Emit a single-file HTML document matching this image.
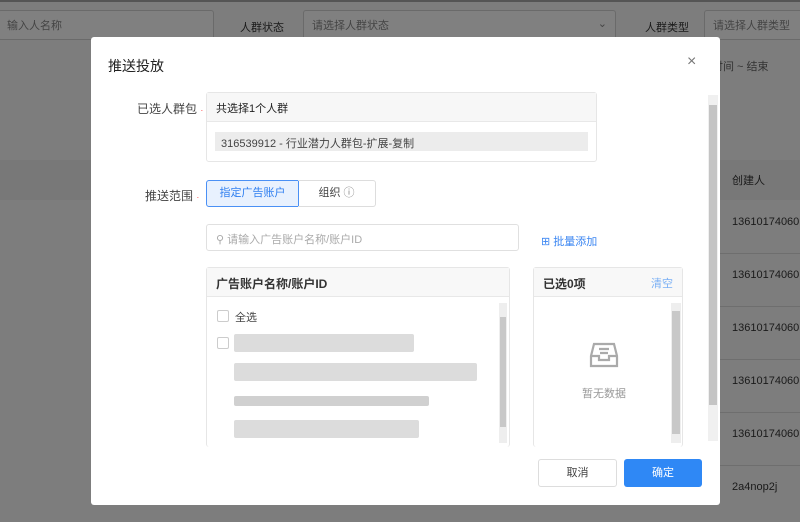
<!DOCTYPE html>
<html><head><meta charset="utf-8"><style>
*{box-sizing:border-box;margin:0;padding:0}
body{width:800px;height:522px;overflow:hidden;background:#7d7d7d;font-family:"Liberation Sans","Noto Sans CJK SC",sans-serif;font-size:12px;color:#222;position:relative}
.a{position:absolute}
.bgt{color:#1a1a1a;font-size:11px}
.inp{border:1px solid #6a6a6a;background:#808080;border-radius:3px;color:#444;font-size:11px;padding:6px 8px}
.modal{left:91px;top:37px;width:629px;height:468px;background:#fff;border-radius:3px}
.lbl{font-size:12px;color:#444}
.blur{background:#dcdcdc;height:12px;border-radius:2px}
.cb{width:12px;height:12px;border:1px solid #ccc;border-radius:2px;background:#fff}
</style></head><body>
<div class="a" style="left:0;top:0;width:800px;height:2px;background:#555"></div>
<div class="a inp" style="left:-2px;top:10px;width:216px;height:30px">输入人名称</div>
<div class="a bgt" style="left:240px;top:19px">人群状态</div>
<div class="a inp" style="left:303px;top:10px;width:313px;height:30px">请选择人群状态<span style="float:right">⌄</span></div>
<div class="a bgt" style="left:645px;top:19px">人群类型</div>
<div class="a inp" style="left:704px;top:10px;width:100px;height:30px">请选择人群类型</div>
<div class="a bgt" style="left:690px;top:58px;color:#333">开始时间 ~ 结束</div>
<div class="a" style="left:0;top:160px;width:800px;height:40px;background:#787878"></div>
<div class="a bgt" style="left:732px;top:172px">创建人</div>
<div class="a bgt" style="left:732px;top:216px">13610174060</div>
<div class="a bgt" style="left:732px;top:269px">13610174060</div>
<div class="a bgt" style="left:732px;top:322px">13610174060</div>
<div class="a bgt" style="left:732px;top:375px">13610174060</div>
<div class="a bgt" style="left:732px;top:428px">13610174060</div>
<div class="a bgt" style="left:732px;top:481px">2a4nop2j</div>
<div class="a" style="left:720px;top:253px;width:80px;height:1px;background:#6e6e6e"></div>
<div class="a" style="left:720px;top:306px;width:80px;height:1px;background:#6e6e6e"></div>
<div class="a" style="left:720px;top:359px;width:80px;height:1px;background:#6e6e6e"></div>
<div class="a" style="left:720px;top:412px;width:80px;height:1px;background:#6e6e6e"></div>
<div class="a" style="left:720px;top:465px;width:80px;height:1px;background:#6e6e6e"></div>

<div class="a modal">
  <div class="a" style="left:17px;top:19px;font-size:14px;color:#222">推送投放</div>
  <div class="a" style="left:596px;top:16px;font-size:16px;color:#777">×</div>
  <div class="a" style="left:617px;top:58px;width:10px;height:346px;background:#f0f0f0"></div>
  <div class="a" style="left:618px;top:68px;width:8px;height:300px;background:#c4c4c4"></div>

  <div class="a lbl" style="left:46px;top:63px">已选人群包 <span style="color:#f55;font-size:9px">·</span></div>
  <div class="a" style="left:115px;top:55px;width:391px;height:70px;border:1px solid #e6e6e6;border-radius:3px">
    <div style="height:29px;background:#f7f7f7;border-bottom:1px solid #e8e8e8;padding:7px 9px;font-size:11px">共选择1个人群</div>
    <div style="margin:10px 8px;height:19px;background:#ececec;padding:3px 6px;font-size:11px;color:#444">316539912 - 行业潜力人群包-扩展-复制</div>
  </div>

  <div class="a lbl" style="left:54px;top:150px">推送范围 <span style="color:#f55;font-size:9px">·</span></div>
  <div class="a" style="left:115px;top:143px;width:93px;height:27px;border:1px solid #4a90f5;background:#e8f1fe;color:#2f7ff0;border-radius:3px 0 0 3px;font-size:11px;text-align:center;line-height:25px">指定广告账户</div>
  <div class="a" style="left:207px;top:143px;width:78px;height:27px;border:1px solid #ddd;border-left:none;border-radius:0 3px 3px 0;font-size:11px;text-align:center;line-height:25px;color:#444">组织 <span style="color:#888">ⓘ</span></div>

  <div class="a" style="left:115px;top:187px;width:313px;height:27px;border:1px solid #e0e0e0;border-radius:3px;padding:6px 9px;color:#aaa;font-size:11px">⚲ 请输入广告账户名称/账户ID</div>
  <div class="a" style="left:450px;top:196px;color:#3b86f2;font-size:11px">⊞ 批量添加</div>

  <div class="a" style="left:115px;top:230px;width:304px;height:180px;border:1px solid #e6e6e6;border-radius:3px;border-bottom:none">
    <div style="height:29px;background:#f8f8f8;border-bottom:1px solid #e8e8e8;padding:7px 9px;font-size:12px;font-weight:bold;color:#333">广告账户名称/账户ID</div>
    <div class="a" style="left:292px;top:35px;width:8px;height:140px;background:#eee"></div>
    <div class="a" style="left:293px;top:49px;width:6px;height:110px;background:#c8c8c8"></div>
    <div class="a cb" style="left:10px;top:42px"></div>
    <div class="a" style="left:28px;top:41px;font-size:11px;color:#444">全选</div>
    <div class="a cb" style="left:10px;top:69px"></div>
    <div class="a blur" style="left:27px;top:66px;width:180px;height:18px"></div>
    <div class="a blur" style="left:27px;top:95px;width:243px;height:18px"></div>
    <div class="a blur" style="left:27px;top:128px;width:195px;height:10px;background:#d0d0d0"></div>
    <div class="a blur" style="left:27px;top:152px;width:185px;height:18px"></div>
  </div>

  <div class="a" style="left:442px;top:230px;width:150px;height:180px;border:1px solid #e6e6e6;border-radius:3px;border-bottom:none">
    <div style="height:29px;background:#f8f8f8;border-bottom:1px solid #e8e8e8;padding:7px 9px;font-size:12px;font-weight:bold;color:#333">已选0项<span style="float:right;font-weight:normal;color:#7ab0f5;font-size:11px">清空</span></div>
    <div class="a" style="left:137px;top:35px;width:10px;height:140px;background:#eee"></div>
    <div class="a" style="left:138px;top:43px;width:8px;height:123px;background:#c8c8c8"></div>
    <svg class="a" style="left:55px;top:73px" width="30" height="28" viewBox="0 0 30 28" fill="none" stroke="#aaa" stroke-width="2.2"><path d="M5 3h20l3 12v10H2V15z"/><path d="M2 15h8v4h10v-4h8"/><path d="M10 8h10M11 12h8"/></svg>
    <div class="a" style="left:48px;top:117px;font-size:11px;color:#999">暂无数据</div>
  </div>

  <div class="a" style="left:447px;top:422px;width:79px;height:28px;border:1px solid #ddd;border-radius:3px;text-align:center;line-height:26px;font-size:11px;color:#444">取消</div>
  <div class="a" style="left:533px;top:422px;width:78px;height:28px;background:#2f88f5;border-radius:3px;text-align:center;line-height:28px;font-size:11px;color:#fff">确定</div>
</div>
</body></html>
